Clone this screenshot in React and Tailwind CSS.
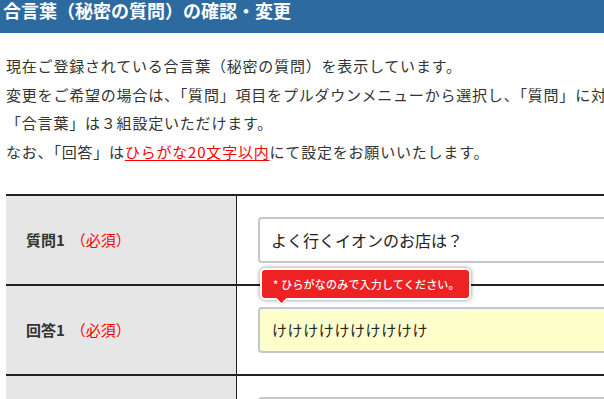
export default function App() {
  const jp = { fontFamily: '"Noto Sans CJK JP", "Noto Sans", sans-serif' };

  return (
    <div className="w-full h-[399px] overflow-hidden bg-white text-[#333]" style={jp}>
      <div className="h-[33px] bg-[#2c6a9f] pl-[3px]">
        <h1 className="text-[18px] leading-[20px] font-bold text-white whitespace-nowrap">
          合言葉（秘密の質問）の確認・変更
        </h1>
      </div>

      <div className="px-[6px] pt-[19px] text-[15px] leading-[28.5px] tracking-[0.8px] whitespace-nowrap">
        <p>現在ご登録されている合言葉（秘密の質問）を表示しています。</p>
        <p>変更をご希望の場合は、「質問」項目をプルダウンメニューから選択し、「質問」に対する「回答」を入力してください。</p>
        <p>「合言葉」は３組設定いただけます。</p>
        <p>
          なお、「回答」は<span className="text-[#ff0000] underline underline-offset-2">ひらがな20文字以内</span>にて設定をお願いいたします。
        </p>
      </div>

      <div className="mt-[28px] ml-[6px] w-[900px]">
        <div className="flex h-[90px] border-t-2 border-[#222]">
          <div className="w-[231px] shrink-0 bg-[#e6e6e6] border-r border-[#222] flex items-center pl-[20px] text-[15px]">
            <span className="font-bold">質問1</span>
            <span className="text-[#ff0000] ml-[6px]">（必須）</span>
          </div>
          <div className="flex-1 flex items-center pl-[21px]">
            <div className="w-[500px] h-[46px] border-2 border-[#c4c7cb] rounded-[4px] bg-white flex items-center pl-[11px] text-[16px] text-[#222]">
              よく行くイオンのお店は？
            </div>
          </div>
        </div>

        <div className="flex h-[90px] border-t-2 border-[#222]">
          <div className="w-[231px] shrink-0 bg-[#e6e6e6] border-r border-[#222] flex items-center pl-[20px] text-[15px]">
            <span className="font-bold">回答1</span>
            <span className="text-[#ff0000] ml-[6px]">（必須）</span>
          </div>
          <div className="flex-1 flex items-center pl-[21px]">
            <div className="relative w-[500px] h-[46px] border-2 border-[#c4c7cb] rounded-[4px] bg-[#ffffcc] flex items-center pl-[12px] text-[15px] tracking-[0.6px] text-[#222]">
              けけけけけけけけけけ
              <div className="absolute left-[0px] top-[-41px] w-[211px] h-[32px] rounded-[5px] bg-[#ee2222] border-2 border-white shadow-[0_0_4px_rgba(0,0,0,0.45)] flex items-center pl-[11px] text-[11px] text-white tracking-[0.2px] font-medium whitespace-nowrap">
                * ひらがなのみで入力してください。
                <div className="absolute left-[15px] bottom-[-6px] w-[9px] h-[9px] rotate-45 bg-[#ee2222] border-r-2 border-b-2 border-white"></div>
              </div>
            </div>
          </div>
        </div>

        <div className="flex h-[90px] border-t-2 border-[#222]">
          <div className="w-[231px] shrink-0 bg-[#e6e6e6] border-r border-[#222] flex items-center pl-[20px] text-[15px]">
            <span className="font-bold">質問2</span>
            <span className="text-[#ff0000] ml-[6px]">（必須）</span>
          </div>
          <div className="flex-1 flex items-center pl-[21px]">
            <div className="w-[500px] h-[46px] border-2 border-[#c4c7cb] rounded-[4px] bg-white flex items-center pl-[11px] text-[16px] text-[#222]">
              ペットの名前は？
            </div>
          </div>
        </div>
      </div>
    </div>
  );
}
